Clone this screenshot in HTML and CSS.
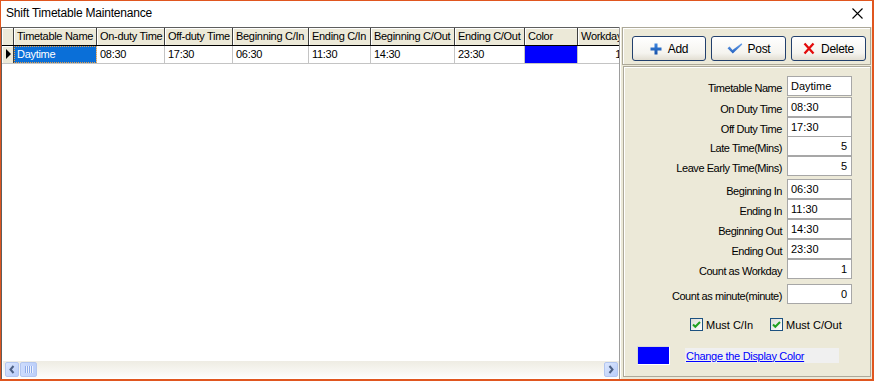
FILE: index.html
```html
<!DOCTYPE html>
<html>
<head>
<meta charset="utf-8">
<title>Shift Timetable Maintenance</title>
<link rel="stylesheet" href="styles.css">
</head>
<body>
<div class="window">
  <div class="titlebar">
    <span class="title">Shift Timetable Maintenance</span>
    <svg class="close" width="11" height="11" viewBox="0 0 11 11"><path d="M0.5 0.5 L10.5 10.5 M10.5 0.5 L0.5 10.5" stroke="#000" stroke-width="1.1" fill="none"/></svg>
  </div>
  <div class="main">
    <div class="grid-area">
      <div class="grid-body">
        <div class="hrow">
          <div class="ind"></div>
          <div class="hc c-name">Timetable Name</div>
          <div class="hc c-on">On-duty Time</div>
          <div class="hc c-off">Off-duty Time</div>
          <div class="hc c-bci">Beginning C/In</div>
          <div class="hc c-eci">Ending C/In</div>
          <div class="hc c-bco">Beginning C/Out</div>
          <div class="hc c-eco">Ending C/Out</div>
          <div class="hc c-color">Color</div>
          <div class="hc c-work">Workday</div>
        </div>
        <div class="drow">
          <div class="ind"><span class="tri"></span></div>
          <div class="dc c-name sel">Daytime</div>
          <div class="dc c-on">08:30</div>
          <div class="dc c-off">17:30</div>
          <div class="dc c-bci">06:30</div>
          <div class="dc c-eci">11:30</div>
          <div class="dc c-bco">14:30</div>
          <div class="dc c-eco">23:30</div>
          <div class="dc c-color swatch-cell"></div>
          <div class="dc c-work num">1</div>
        </div>
      </div>
      <div class="hscroll">
        <div class="sb-btn">
          <svg width="12" height="13" viewBox="0 0 12 13"><path d="M7.5 3 L4.5 6.5 L7.5 10" stroke="#4d6185" stroke-width="2" fill="none"/></svg>
        </div>
        <div class="sb-thumb">
          <span class="grip"></span><span class="grip"></span><span class="grip"></span><span class="grip"></span>
        </div>
        <div class="sb-btn sb-right">
          <svg width="12" height="13" viewBox="0 0 12 13"><path d="M4.5 3 L7.5 6.5 L4.5 10" stroke="#4d6185" stroke-width="2" fill="none"/></svg>
        </div>
      </div>
    </div>

    <div class="panel">
      <div class="toolbar">
        <button class="btn btn-add">
          <svg width="12" height="12" viewBox="0 0 12 12"><defs><linearGradient id="gp" x1="0" y1="0" x2="0" y2="1"><stop offset="0" stop-color="#3d86e0"/><stop offset="1" stop-color="#1550a8"/></linearGradient></defs><path d="M4.5 0.5h3v4h4v3h-4v4h-3v-4h-4v-3h4z" fill="url(#gp)"/></svg>
          <span>Add</span>
        </button>
        <button class="btn btn-post">
          <svg width="16" height="11" viewBox="0 0 16 11"><defs><linearGradient id="gc" x1="0" y1="0" x2="0" y2="1"><stop offset="0" stop-color="#6aa0e8"/><stop offset="1" stop-color="#2160c0"/></linearGradient></defs><path d="M0.5 5.2 L2.6 3.6 L5.5 7 L14.5 0.3 L15.3 1.6 L5.8 10.6 Z" fill="url(#gc)"/></svg>
          <span>Post</span>
        </button>
        <button class="btn btn-del">
          <svg width="12" height="13" viewBox="0 0 12 13"><path d="M1.5 1.5 L10.5 11.5 M10.5 1.5 L1.5 11.5" stroke="#e30b0b" stroke-width="2.3" fill="none"/></svg>
          <span>Delete</span>
        </button>
      </div>

      <div class="form">
        <div class="fields">
          <div class="lbl">Timetable Name</div><div class="inp">Daytime</div>
          <div class="lbl">On Duty Time</div><div class="inp">08:30</div>
          <div class="lbl">Off Duty Time</div><div class="inp">17:30</div>
          <div class="lbl">Late Time(Mins)</div><div class="inp num">5</div>
          <div class="lbl">Leave Early Time(Mins)</div><div class="inp num">5</div>
          <div class="lbl">Beginning In</div><div class="inp">06:30</div>
          <div class="lbl">Ending In</div><div class="inp">11:30</div>
          <div class="lbl">Beginning Out</div><div class="inp">14:30</div>
          <div class="lbl">Ending Out</div><div class="inp">23:30</div>
          <div class="lbl">Count as Workday</div><div class="inp num">1</div>
          <div class="lbl">Count as minute(minute)</div><div class="inp num">0</div>
        </div>

        <div class="checks">
          <div class="cb-item">
            <span class="cb"><svg width="11" height="11" viewBox="0 0 11 11"><path d="M2 5.5 L4.3 7.8 L9 3" stroke="#21a121" stroke-width="2" fill="none"/></svg></span>
            <span>Must C/In</span>
          </div>
          <div class="cb-item">
            <span class="cb"><svg width="11" height="11" viewBox="0 0 11 11"><path d="M2 5.5 L4.3 7.8 L9 3" stroke="#21a121" stroke-width="2" fill="none"/></svg></span>
            <span>Must C/Out</span>
          </div>
        </div>

        <div class="colorrow">
          <div class="swatch"></div>
          <div class="link-box"><a class="link">Change the Display Color</a></div>
        </div>
      </div>
    </div>
  </div>
</div>
</body>
</html>
```

FILE: styles.css
```css
* { box-sizing: border-box; }
html, body { margin: 0; padding: 0; background: #fff; }
body {
  font-family: "Liberation Sans", Arial, sans-serif;
  font-size: 11px;
  color: #000;
}

.window {
  width: 874px;
  height: 381px;
  border-style: solid;
  border-color: #e0561f;
  border-width: 1px 2px 2px 1px;
  display: flex;
  flex-direction: column;
  background: #fff;
  overflow: hidden;
}

.titlebar {
  height: 26px;
  flex: none;
  display: flex;
  align-items: center;
  justify-content: space-between;
  padding: 0 9px 2px 5px;
}
.title { font-size: 12px; letter-spacing: -0.2px; }
.close { display: block; }

.main { flex: 1; display: flex; min-height: 0; }

/* ---------- grid ---------- */
.grid-area {
  width: 618px;
  flex: none;
  display: flex;
  flex-direction: column;
  border-top: 1px solid #5e5e5e;
  border-left: 1px solid #5e5e5e;
  padding-bottom: 1px;
  overflow: hidden;
}
.grid-body { flex: 1; overflow: hidden; background: #fff; }

.hrow, .drow { display: flex; }
.hrow { height: 18px; border-bottom: 1px solid #000; }
.drow { height: 18px; border-bottom: 1px solid #c4c4c4; }

.ind {
  flex: none;
  width: 12px;
  height: 17px;
  background: #ece9d8;
  border-right: 1px solid #3f3f3f;
  box-shadow: inset 1px 1px 0 #fff;
}
.tri {
  display: block;
  width: 0;
  height: 0;
  margin: 3px 0 0 4px;
  border-left: 5px solid #000;
  border-top: 5px solid transparent;
  border-bottom: 5px solid transparent;
}

.hc, .dc {
  flex: none;
  height: 17px;
  line-height: 17px;
  padding-left: 3px;
  white-space: nowrap;
  overflow: hidden;
  letter-spacing: -0.3px;
}
.hc {
  background: #ece9d8;
  border-right: 1px solid #3f3f3f;
  box-shadow: inset 1px 1px 0 #fff;
}
.dc { border-right: 1px solid #c4c4c4; }
.dc.num { text-align: right; padding-right: 4px; }

.sel {
  background: #0a6fd8;
  color: #fff;
  outline: 1px dotted #e7a04a;
  outline-offset: -1px;
}
.swatch-cell { background: #0000ff; }

.c-name { width: 83px; }
.c-on { width: 68px; }
.c-off { width: 68px; }
.c-bci { width: 76px; }
.c-eci { width: 62px; }
.c-bco { width: 84px; }
.c-eco { width: 70px; }
.c-color { width: 53px; }
.c-work { width: 48px; }

/* ---------- scrollbar ---------- */
.hscroll {
  flex: none;
  height: 17px;
  margin-left: 1px;
  padding: 0 1px 0 2px;
  display: flex;
  align-items: center;
  background: linear-gradient(#eeece3, #f7f6f1 60%, #fdfdfc);
}
.sb-btn {
  width: 14px;
  height: 15px;
  border: 1px solid #b3c6ef;
  border-radius: 2px;
  background: linear-gradient(135deg, #dbe6fd, #b9cdf9);
  display: flex;
  align-items: center;
  justify-content: center;
}
.sb-btn svg { display: block; }
.sb-right { margin-left: auto; }
.sb-thumb {
  width: 17px;
  height: 15px;
  margin-left: 1px;
  border: 1px solid #b3c6ef;
  border-radius: 2px;
  background: linear-gradient(90deg, #cddcfd, #bccff9);
  display: flex;
  align-items: center;
  justify-content: center;
  gap: 1px;
}
.grip {
  width: 1px;
  height: 7px;
  background: #8eabe9;
  box-shadow: 1px 0 0 #eef3fe;
}

/* ---------- right panel ---------- */
.panel {
  flex: 1;
  background: #ece9d8;
  border-left: 1px solid #9d9d9d;
  box-shadow: inset 1px 0 0 #fff;
  display: flex;
  flex-direction: column;
  padding: 0 1px 2px 0;
}

.toolbar {
  flex: none;
  height: 38px;
  margin-left: 2px;
  border: 1px solid #aca899;
  box-shadow: inset 1px 1px 0 #fff;
  display: flex;
  gap: 5px;
  padding: 8px 0 0 9px;
}
.btn {
  width: 75px;
  height: 25px;
  padding: 0;
  margin: 0;
  border: 1px solid #22406d;
  border-radius: 3px;
  background: linear-gradient(#ffffff, #f5f4ef 70%, #e2ded2);
  display: flex;
  align-items: center;
  justify-content: center;
  gap: 6px;
  font-family: "Liberation Sans", Arial, sans-serif;
  font-size: 12px;
  letter-spacing: -0.3px;
  color: #000;
}
.btn svg { display: block; flex: none; }
.btn-add { width: 74px; }
.btn-post { gap: 5px; }

.form {
  flex: 1;
  margin: 1px 0 0 3px;
  border: 1px solid #aca899;
  box-shadow: inset 1px 1px 0 #fff;
  padding: 9px 18px 0 0;
  display: flex;
  flex-direction: column;
}
.fields {
  display: grid;
  grid-template-columns: 1fr 65px;
  grid-template-rows: 21px 20px 19px 20px 23px 20px 20px 20px 20px 25px 20px;
  column-gap: 5px;
}
.lbl {
  text-align: right;
  padding-top: 6px;
  line-height: 13px;
  letter-spacing: -0.45px;
  white-space: nowrap;
}
.inp {
  height: 20px;
  background: #fff;
  border: 1px solid #a7a7a7;
  padding: 2px 3px 0 3px;
  line-height: 14px;
  white-space: nowrap;
  overflow: hidden;
}
.inp.num { text-align: right; padding-right: 4px; }

.checks {
  display: flex;
  align-items: center;
  gap: 17px;
  margin-top: 14px;
  padding-left: 66px;
}
.cb-item { display: flex; align-items: center; gap: 3px; }
.cb {
  width: 13px;
  height: 13px;
  border: 1px solid #1c5180;
  background: linear-gradient(135deg, #dcdcd6, #ffffff);
  display: flex;
  align-items: center;
  justify-content: center;
}
.cb svg { display: block; }

.colorrow {
  display: flex;
  align-items: center;
  margin-top: 15px;
  padding-left: 13px;
}
.swatch {
  width: 33px;
  height: 19px;
  background: #0000ff;
  border: 1px solid;
  border-color: #d8d8d8 #ffffff #ffffff #d8d8d8;
}
.link-box {
  margin-left: 15px;
  width: 154px;
  height: 15px;
  background: #f0f0f0;
  display: flex;
  align-items: center;
  padding-left: 1px;
}
.link {
  color: #0000ff;
  text-decoration: underline;
  letter-spacing: -0.3px;
  cursor: pointer;
}
```
